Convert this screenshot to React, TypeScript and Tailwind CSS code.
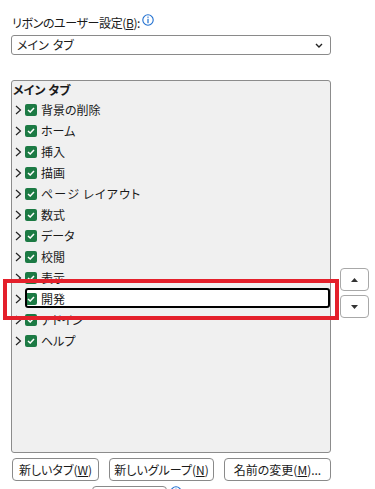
import React from "react";

const FONT =
  "font-['Noto_Sans_CJK_JP','Noto_Sans',sans-serif] [font-feature-settings:'palt']";

const items = [
  "背景の削除",
  "ホーム",
  "挿入",
  "描画",
  "ページ レイアウト",
  "数式",
  "データ",
  "校閲",
  "表示",
  "開発",
  "アドイン",
  "ヘルプ",
];

function Chevron() {
  return (
    <svg width="7" height="10" viewBox="0 0 7 10" className="block">
      <polyline
        points="1,1 5.5,5 1,9"
        fill="none"
        stroke="#222"
        strokeWidth="1.2"
      />
    </svg>
  );
}

function Check() {
  return (
    <div className="w-[12px] h-[12px] rounded-[2px] bg-[#1c7a44] flex items-center justify-center shrink-0">
      <svg width="8" height="6" viewBox="0 0 8 6">
        <polyline
          points="1,3 3.2,5 7,1"
          fill="none"
          stroke="#fff"
          strokeWidth="1.5"
        />
      </svg>
    </div>
  );
}

function InfoIcon() {
  return (
    <svg width="12" height="12" viewBox="0 0 12 12" className="block">
      <circle cx="6" cy="6" r="5.2" fill="none" stroke="#1f6fd0" strokeWidth="1.1" />
      <rect x="5.4" y="2.6" width="1.2" height="1.2" fill="#1f6fd0" />
      <rect x="5.4" y="4.8" width="1.2" height="4.4" fill="#1f6fd0" />
    </svg>
  );
}

function Label({ text }: { text: string }) {
  if (text === "ページ レイアウト") {
    return (
      <span className="relative ml-[4px] leading-[21px] tracking-[1.2px]">
        ページ<span className="inline-block w-[3px]" />レイアウト
      </span>
    );
  }
  return <span className="relative ml-[4px] leading-[21px]">{text}</span>;
}

export default function App() {
  return (
    <div className={`relative w-[375px] h-[489px] overflow-hidden bg-white text-[12px] text-[#1a1a1a] ${FONT}`}>
      <div className="pl-[11px] pt-[13px]">
        {/* label */}
        <div className="h-[20px] flex items-center gap-[2px] pl-[1px]">
          <span className="leading-[20px] tracking-[-0.4px]">
            リボンのユーザー設定(<span className="underline">B</span>):
          </span>
          <span className="-mt-[7px]">
            <InfoIcon />
          </span>
        </div>

        {/* dropdown */}
        <div className="mt-[2px] w-[320px] h-[20px] border border-[#8a8a8a] rounded-[3px] flex items-center justify-between pl-[5px] pr-[7px]">
          <span className="leading-[18px]">
            メイン<span className="inline-block w-[4px]" />タブ
          </span>
          <svg width="8" height="5" viewBox="0 0 8 5">
            <polyline points="1,1 4,4 7,1" fill="none" stroke="#222" strokeWidth="1.4" />
          </svg>
        </div>

        {/* list + arrows */}
        <div className="mt-[25px] flex gap-[9px]">
          <div className="w-[320px] h-[373px] border border-[#8c8c8c] rounded-[3px] bg-[#f0f0f0]">
            <div className="h-[18px] leading-[18px] pl-[1px] font-bold">
              メイン<span className="inline-block w-[3px]" />タブ
            </div>
            {items.map((it) => {
              const sel = it === "開発";
              return (
                <div key={it} className="relative h-[21px] flex items-center">
                  {sel && (
                    <div className="absolute left-[13px] right-0 top-0 h-[20px] bg-white rounded-[3px]" />
                  )}
                  <div className="relative w-[13px] flex justify-center">
                    <Chevron />
                  </div>
                  <div className="relative">
                    <Check />
                  </div>
                  <Label text={it} />
                  {sel && (
                    <div className="absolute left-[13px] right-0 top-0 h-[20px] border-2 border-black rounded-[3px] pointer-events-none" />
                  )}
                </div>
              );
            })}
          </div>
          <div className="mt-[188px] flex flex-col gap-[4px]">
            <div className="w-[29px] h-[23px] border border-[#a8a8a8] rounded-[4px] bg-white flex items-center justify-center">
              <svg width="7" height="4" viewBox="0 0 7 4">
                <polygon points="0,4 3.5,0 7,4" fill="#333" />
              </svg>
            </div>
            <div className="w-[29px] h-[23px] border border-[#a8a8a8] rounded-[4px] bg-white flex items-center justify-center">
              <svg width="7" height="4" viewBox="0 0 7 4">
                <polygon points="0,0 3.5,4 7,0" fill="#333" />
              </svg>
            </div>
          </div>
        </div>

        {/* buttons */}
        <div className="mt-[5px] flex gap-[10px] pl-[1px]">
          <div className="w-[87px] h-[23px] border border-[#8a8a8a] rounded-[4px] bg-white flex items-center justify-center">
            新しいタブ(<span className="underline">W</span>)
          </div>
          <div className="w-[105px] h-[23px] border border-[#8a8a8a] rounded-[4px] bg-white flex items-center justify-center">
            新しいグループ(<span className="underline">N</span>)
          </div>
          <div className="w-[107px] h-[23px] border border-[#8a8a8a] rounded-[4px] bg-white flex items-center justify-center">
            名前の変更(<span className="underline">M</span>)...
          </div>
        </div>

        {/* partially visible row */}
        <div className="mt-[5px] flex items-start">
          <span className="ml-[24px] w-[57px] leading-[20px] -mt-[1px]">ユーザー設定:</span>
          <div className="w-[75px] h-[22px] border border-[#8a8a8a] rounded-[4px] bg-white" />
          <span className="ml-[3px]">
            <InfoIcon />
          </span>
        </div>
      </div>

      {/* red annotation box */}
      <div className="absolute left-[3px] top-[279px] w-[336px] h-[41px] border-4 border-[#e4202b] pointer-events-none" />
    </div>
  );
}
